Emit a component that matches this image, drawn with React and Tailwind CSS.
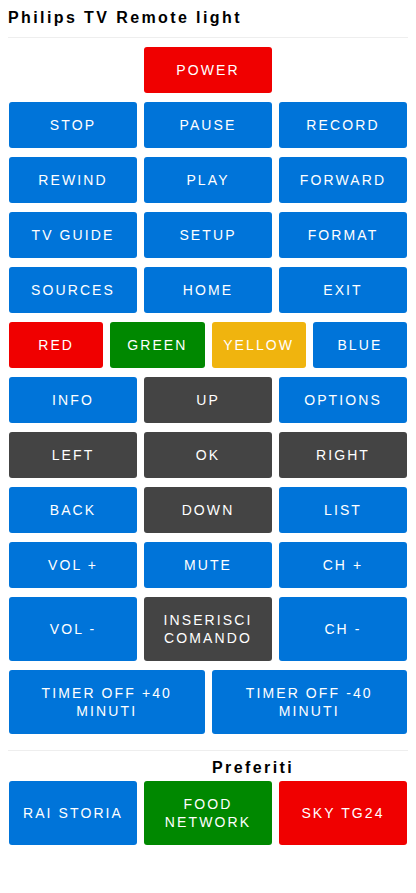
import React from "react";

const C = {
  blue: "bg-[#0074d9]",
  red: "bg-[#f00000]",
  green: "bg-[#008800]",
  yellow: "bg-[#f0b40e]",
  dark: "bg-[#444444]",
};

function Btn({ label, color = C.blue, className = "" }) {
  return (
    <div
      className={`${color} ${className} flex items-center justify-center text-center rounded-[3px] text-white text-[14px] leading-[18px] tracking-[0.15em] py-[14px] px-2`}
    >
      <span className="whitespace-pre-line">{label}</span>
    </div>
  );
}

export default function App() {
  const rows3 = [
    [["STOP"], ["PAUSE"], ["RECORD"]],
    [["REWIND"], ["PLAY"], ["FORWARD"]],
    [["TV GUIDE"], ["SETUP"], ["FORMAT"]],
    [["SOURCES"], ["HOME"], ["EXIT"]],
  ];
  const rowsB = [
    [["INFO"], ["UP", C.dark], ["OPTIONS"]],
    [["LEFT", C.dark], ["OK", C.dark], ["RIGHT", C.dark]],
    [["BACK"], ["DOWN", C.dark], ["LIST"]],
    [["VOL +"], ["MUTE"], ["CH +"]],
    [["VOL -"], ["INSERISCI\nCOMANDO", C.dark], ["CH -"]],
  ];
  return (
    <div
      className="p-2 bg-white min-h-[893px] text-black"
      style={{ fontFamily: '"Liberation Sans", Arial, sans-serif' }}
    >
      <h1 className="text-[16px] leading-[20px] font-bold tracking-[0.15em] pb-[9px] border-b border-[#eeeeee]">
        Philips TV Remote light
      </h1>
      <div className="px-[1px] mt-[9px] flex flex-col gap-[9px]">
        <div className="grid grid-cols-3 gap-x-[7px]">
          <div />
          <Btn label="POWER" color={C.red} />
          <div />
        </div>
        {rows3.map((r, i) => (
          <div key={i} className="grid grid-cols-3 gap-x-[7px]">
            {r.map(([l, c]) => (
              <Btn key={l} label={l} color={c} />
            ))}
          </div>
        ))}
        <div className="grid grid-cols-4 gap-x-[7px]">
          <Btn label="RED" color={C.red} />
          <Btn label="GREEN" color={C.green} />
          <Btn label="YELLOW" color={C.yellow} className="px-0" />
          <Btn label="BLUE" />
        </div>
        {rowsB.map((r, i) => (
          <div key={i} className="grid grid-cols-3 gap-x-[7px]">
            {r.map(([l, c]) => (
              <Btn key={l} label={l} color={c} />
            ))}
          </div>
        ))}
        <div className="grid grid-cols-2 gap-x-[7px]">
          <Btn label={"TIMER OFF +40\nMINUTI"} />
          <Btn label={"TIMER OFF -40\nMINUTI"} />
        </div>
      </div>
      <div className="mt-[16px] border-t border-[#eeeeee]" />
      <div className="mt-[7px] pl-[204px] text-[16px] leading-[20px] font-bold tracking-[0.15em]">
        Preferiti
      </div>
      <div className="px-[1px] mt-[3px] grid grid-cols-3 gap-x-[7px]">
        <Btn label="RAI STORIA" />
        <Btn label={"FOOD\nNETWORK"} color={C.green} />
        <Btn label="SKY TG24" color={C.red} />
      </div>
    </div>
  );
}
